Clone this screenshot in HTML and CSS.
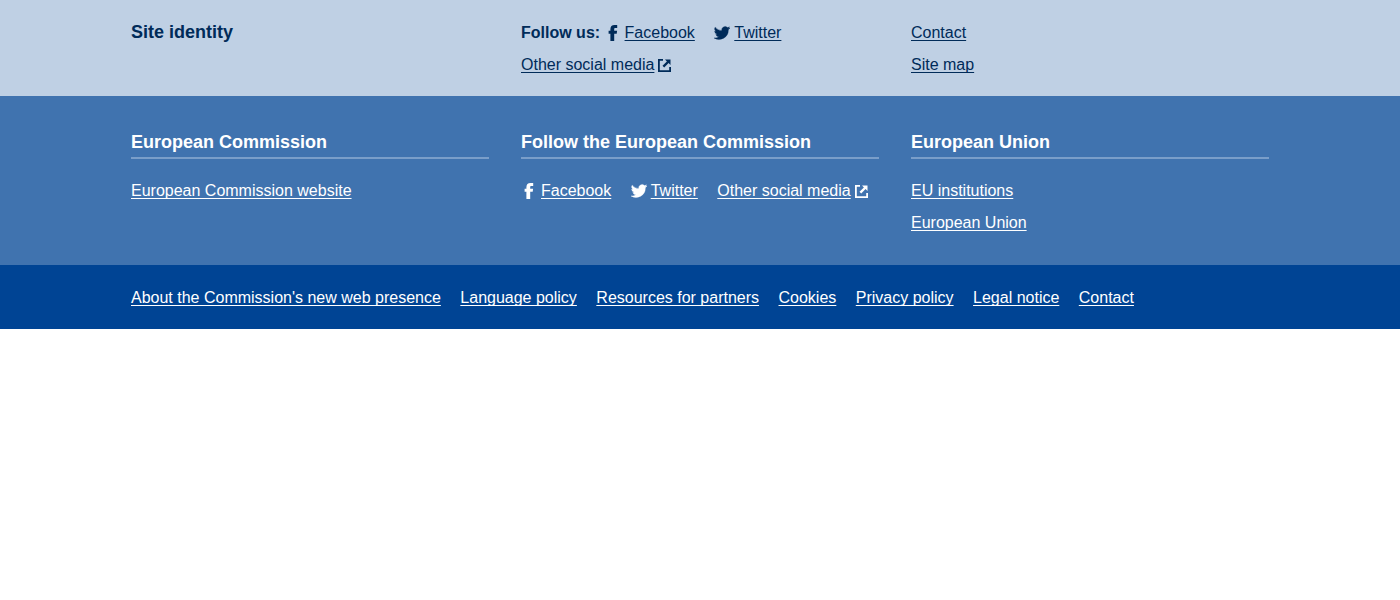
FILE: index.html
```html
<!DOCTYPE html>
<html lang="en">
<head>
<meta charset="utf-8">
<meta name="viewport" content="width=device-width, initial-scale=1">
<title>Site identity</title>
<link rel="stylesheet" href="styles.css">
</head>
<body>
<svg class="sprite" aria-hidden="true">
  <symbol id="facebook" viewBox="0 0 16 16"><path d="M5.400 16V8.700H3.600V5.800h1.800V4.200C5.400 1.500 6.800 0 9.500 0h2.700v2.900h-1.600C9.400 2.900 9.200 3.400 9.200 4.200v1.600h2.900l-.4 2.900H9.200V16z"/></symbol>
  <symbol id="twitter" viewBox="0 0 24 24"><path stroke="currentColor" stroke-width=".5" d="M24 4.600a10 10 0 0 1-2.800.8 5 5 0 0 0 2.100-2.700 10 10 0 0 1-3.100 1.200 4.900 4.900 0 0 0-8.400 4.500A14 14 0 0 1 1.700 3.200a4.900 4.900 0 0 0 1.500 6.500 4.900 4.900 0 0 1-2.200-.6v.1a4.900 4.900 0 0 0 3.900 4.800 5 5 0 0 1-2.200.1 4.900 4.900 0 0 0 4.600 3.400A9.900 9.900 0 0 1 0 19.500 14 14 0 0 0 21.500 7.100 10 10 0 0 0 24 4.600z"/></symbol>
  <symbol id="external" viewBox="0 0 13 13"><path d="M0 0h5v1.800H1.800v9.400h9.400V8H13v5H0zM7 .5h5.500V6l-1.900-1.900L6.200 8.500 4.500 6.800l4.400-4.400z"/></symbol>
</svg>
<footer class="footer">
  <section class="band band-site">
    <div class="container columns">
      <h2 class="title">Site identity</h2>
      <div class="social">
        <span class="label">Follow us:</span>
        <span class="item"><svg class="icon"><use href="#facebook"/></svg><a class="link" href="#">Facebook</a></span>
        <span class="item"><svg class="icon"><use href="#twitter"/></svg><a class="link" href="#">Twitter</a></span>
        <span class="item"><a class="link" href="#">Other social media</a><svg class="icon icon-external"><use href="#external"/></svg></span>
      </div>
      <ul class="list">
        <li><a class="link" href="#">Contact</a></li>
        <li><a class="link" href="#">Site map</a></li>
      </ul>
    </div>
  </section>
  <section class="band band-commission">
    <div class="container columns">
      <div>
        <h2 class="title title-ruled">European Commission</h2>
        <ul class="list">
          <li><a class="link" href="#">European Commission website</a></li>
        </ul>
      </div>
      <div>
        <h2 class="title title-ruled">Follow the European Commission</h2>
        <div class="social">
          <span class="item"><svg class="icon"><use href="#facebook"/></svg><a class="link" href="#">Facebook</a></span>
          <span class="item"><svg class="icon"><use href="#twitter"/></svg><a class="link" href="#">Twitter</a></span>
          <span class="item"><a class="link" href="#">Other social media</a><svg class="icon icon-external"><use href="#external"/></svg></span>
        </div>
      </div>
      <div>
        <h2 class="title title-ruled">European Union</h2>
        <ul class="list">
          <li><a class="link" href="#">EU institutions</a></li>
          <li><a class="link" href="#">European Union</a></li>
        </ul>
      </div>
    </div>
  </section>
  <nav class="band band-legal" aria-label="Legal">
    <div class="container">
      <ul class="list">
        <li class="item"><a class="link" href="#">About the Commission's new web presence</a></li>
        <li class="item"><a class="link" href="#">Language policy</a></li>
        <li class="item"><a class="link" href="#">Resources for partners</a></li>
        <li class="item"><a class="link" href="#">Cookies</a></li>
        <li class="item"><a class="link" href="#">Privacy policy</a></li>
        <li class="item"><a class="link" href="#">Legal notice</a></li>
        <li class="item"><a class="link" href="#">Contact</a></li>
      </ul>
    </div>
  </nav>
</footer>
</body>
</html>
```

FILE: styles.css
```css
* { box-sizing: border-box; }

body {
  margin: 0;
  background: #fff;
  font: 16px/32px Arial, "Liberation Sans", sans-serif;
}

.sprite { display: none; }

.band { padding: 17px 0 15px; color: #fff; }
.band-site { background: #bfd0e4; color: #002b59; }
.band-commission { background: #4073af; padding: 32px 0 26px; }
.band-legal { background: #004494; }

.container {
  max-width: 1170px;
  margin: 0 auto;
  padding: 0 16px;
}

.columns {
  display: grid;
  grid-template-columns: repeat(3, minmax(0, 1fr));
  column-gap: 32px;
}

.title { margin: 0; font-size: 18px; line-height: 30px; }
.title-ruled {
  margin-bottom: 16px;
  border-bottom: 2px solid #7a9ec9;
  line-height: 29px;
}

.list { margin: 0; padding: 0; list-style: none; }

.label { font-weight: bold; }
.item { display: inline-block; margin-right: 15px; }
.item:last-child { margin-right: 0; }

.link {
  color: inherit;
  text-decoration: underline 1px;
  text-underline-offset: 2px;
  text-decoration-skip-ink: none;
}

.icon {
  width: 16px;
  height: 16px;
  margin-right: 4px;
  vertical-align: -3px;
  fill: currentColor;
}
.icon-external {
  width: 13px;
  height: 13px;
  margin: 0 0 0 4px;
  vertical-align: -2px;
}
```
